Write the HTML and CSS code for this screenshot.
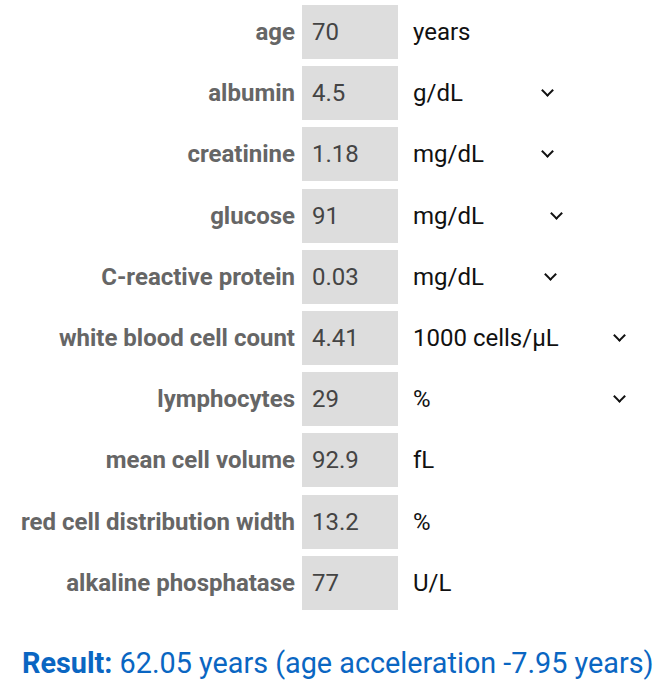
FILE: index.html
```html
<!DOCTYPE html>
<html lang="en">
<head>
  <meta charset="UTF-8">
  <meta name="viewport" content="width=device-width, initial-scale=1.0">
  <title>Biological Age Calculator</title>
  <link rel="stylesheet" href="styles.css">
</head>
<body>

<div class="calc">
  <!-- Input table -->
  <div class="grid">
    <label class="lbl">age</label>
    <div class="val">70</div>
    <div class="unit">years</div>

    <label class="lbl">albumin</label>
    <div class="val">4.5</div>
    <div class="unit sel w140">g/dL <span class="chev"></span></div>

    <label class="lbl">creatinine</label>
    <div class="val">1.18</div>
    <div class="unit sel w140">mg/dL <span class="chev"></span></div>

    <label class="lbl">glucose</label>
    <div class="val">91</div>
    <div class="unit sel w149">mg/dL <span class="chev"></span></div>

    <label class="lbl">C-reactive protein</label>
    <div class="val">0.03</div>
    <div class="unit sel w143">mg/dL <span class="chev"></span></div>

    <label class="lbl">white blood cell count</label>
    <div class="val">4.41</div>
    <div class="unit sel w212">1000 cells/µL <span class="chev"></span></div>

    <label class="lbl">lymphocytes</label>
    <div class="val">29</div>
    <div class="unit sel w212">% <span class="chev"></span></div>

    <label class="lbl">mean cell volume</label>
    <div class="val">92.9</div>
    <div class="unit">fL</div>

    <label class="lbl">red cell distribution width</label>
    <div class="val">13.2</div>
    <div class="unit">%</div>

    <label class="lbl">alkaline phosphatase</label>
    <div class="val">77</div>
    <div class="unit">U/L</div>
  </div>

  <p class="result"><b>Result:</b> 62.05 years (age acceleration -7.95 years)</p>
</div>

</body>
</html>
```

FILE: styles.css
```css
body {
  margin: 0;
  background: #fff;
  font-family: Roboto, "Liberation Sans", sans-serif;
  font-size: 24px;
}
.calc {
  padding-top: 5px;
}
.grid {
  display: grid;
  grid-template-columns: 302px 96px auto;
  grid-auto-rows: 54px;
  row-gap: 7.2px;
}
.lbl {
  display: flex;
  align-items: center;
  justify-content: flex-end;
  padding-right: 7px;
  font-weight: bold;
  color: #666;
  white-space: nowrap;
}
.val {
  display: flex;
  align-items: center;
  padding-left: 10px;
  background: #ddd;
  color: #444;
}
.unit {
  display: flex;
  align-items: center;
  padding-left: 15px;
  color: #111;
}
.sel {
  justify-content: space-between;
  box-sizing: border-box;
}
.w140 { width: 156px; }
.w149 { width: 165px; }
.w143 { width: 159px; }
.w212 { width: 228px; }
.chev {
  width: 7px;
  height: 7px;
  border-right: 2px solid #111;
  border-bottom: 2px solid #111;
  transform: rotate(45deg);
  margin: -5px 2px 0 0;
}
.result {
  margin: 36px 0 0 22px;
  color: #0a66c2;
  font-size: 28.8px;
}
.result b {
  font-weight: bold;
}
```
